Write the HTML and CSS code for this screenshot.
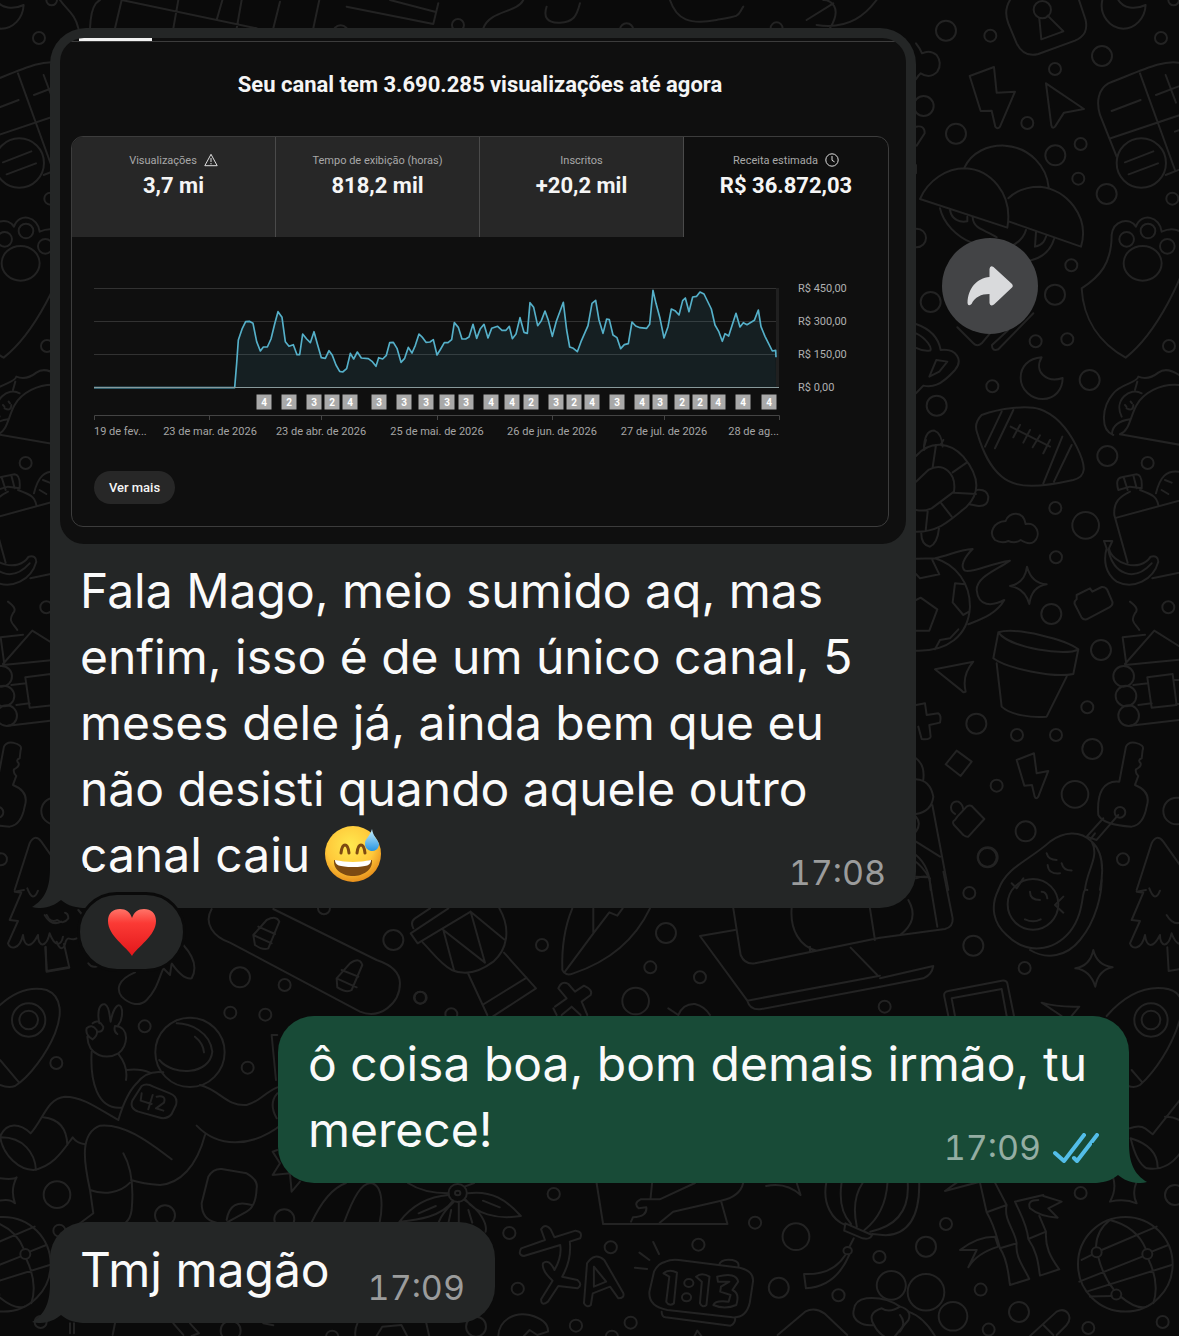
FILE: index.html
```
<!DOCTYPE html>
<html lang="pt-BR">
<head>
    <meta charset="UTF-8">
    <meta name="viewport" content="width=device-width, initial-scale=1.0">
    <title>Conversa</title>
    <link rel="stylesheet" href="styles.css">
</head>
<body>

    <!-- wallpaper: the doodles repeat every 1122px -->
    <svg class="wallpaper" aria-hidden="true">
        <defs>
            <clipPath id="left-edge"><path d="M0 0H80V982H0ZM0 1212H80V1336H0Z"/></clipPath>
        </defs>
        <g id="doodles">
            <!-- top strip -->
            <g transform="translate(50 0) scale(.3333)">
                <path d="M30 0C50 30 75 40 85 85M120 85L122 60C126 20 140 5 150 0M195 85L215 0M215 0L620 85M370 85L385 0M500 60L520 -10M560 85L575 0M670 85L690 5M790 85L808 0M890 20L1150 72L1165 10M1020 0L1155 35M1300 85C1320 30 1400 40 1420 0M1490 20C1480 50 1490 70 1530 68S1580 50 1590 10M1860 0C1880 60 1920 75 2000 60S2060 50 2080 20M2270 60L2350 10M2300 75C2400 90 2450 40 2480 0M2340 85C2380 20 2340 0 2320 0"/>
                <circle cx="872" cy="100" r="24"/><circle cx="1224" cy="75" r="18"/><circle cx="1730" cy="90" r="20"/><circle cx="2180" cy="85" r="18"/>
            </g>
            <!-- lock, bolt, mushrooms, keypad, guitar pick, moon, rugby ball -->
            <g transform="translate(900 0) scale(.3333)">
                <path d="M330 0C315 25 315 45 325 70L350 130C365 160 385 170 415 162L525 122C555 108 563 90 557 60L537 0M418 55L424 118L490 94L443 47"/>
                <circle cx="427" cy="29" r="26"/>
                <path d="M607 0C597 45 630 86 670 86C705 86 735 55 737 15C705 30 670 25 655 0"/>
                <path d="M209 228L282 201L290 278L345 275L300 380Q293 390 286 380L275 332L242 333ZM438 250L552 327L492 338L465 380Q457 388 454 376Z"/>
                <path d="M48 130Q60 145 66 160Q90 148 110 165Q128 190 112 215Q90 238 62 220Q55 225 48 238M48 380Q75 375 74 400L50 437M48 495v25"/>
                <path d="M192 505C215 455 265 435 315 437C390 442 440 500 446 562M60 597C85 540 140 505 195 505C270 508 340 580 322 683ZM325 595C350 570 380 560 420 560C500 568 570 650 543 740L328 665M120 625C130 670 170 710 215 728M150 630C155 660 180 668 202 664V650M218 652C220 690 260 690 290 712M378 690C370 720 345 735 320 745M408 697L405 740C430 735 435 720 440 705M463 715C450 760 420 775 390 782"/>
                <path d="M837 188C790 180 740 205 625 250C595 268 588 305 600 345L650 470M632 415L900 325M720 220L825 510M797 525L900 485M635 333L722 300M768 285L860 250M797 225L828 308M825 395L880 375M675 487L760 454M686 523L774 490"/>
                <circle cx="724" cy="489" r="74"/>
                <path d="M545 865C600 830 635 790 635 705C640 660 690 650 708 680C725 635 780 650 785 695C830 675 865 700 862 745C860 820 770 1000 677 1073C600 1030 550 960 545 865Z"/>
                <circle cx="680" cy="718" r="22"/><circle cx="744" cy="693" r="22"/><circle cx="802" cy="739" r="22"/><ellipse cx="728" cy="790" rx="57" ry="52"/>
                <path d="M172 982L220 1030Q232 1042 245 1030L270 1000M325 990L276 1035Q275 1055 295 1048L400 940M48 972C85 985 115 1010 122 1050C170 1045 190 1080 165 1110C120 1160 95 1162 70 1157L48 1180M48 1000C80 1015 98 1045 90 1052Q70 1055 48 1044M109 1080L142 1085L118 1115L88 1130Z"/>
                <path d="M425 1072C385 1075 362 1100 362 1133C362 1170 395 1197 428 1197C465 1197 488 1168 488 1134C440 1150 400 1115 425 1072Z"/>
                <path d="M232 1300Q220 1270 245 1245C300 1225 380 1215 420 1228C470 1245 505 1290 530 1340C560 1400 560 1430 520 1440C430 1460 350 1470 305 1430C270 1400 250 1360 232 1300ZM305 1235L255 1340M340 1230L285 1345M487 1310L430 1450M515 1335L462 1445M332 1280L450 1340M360 1275L340 1312M390 1290L370 1328M420 1306L398 1342M450 1320L430 1360"/>
                <path d="M837 1155C780 1150 730 1180 710 1215C690 1250 690 1290 660 1303L900 1345M640 1305C600 1290 605 1220 640 1180C665 1150 710 1150 715 1130C740 1140 760 1130 775 1118Q800 1100 837 1125M705 1170L712 1145M665 1250C640 1200 690 1160 725 1180M636 1300Q640 1265 690 1258M675 1215l4 5M692 1205l4 5M680 1225Q700 1235 700 1215"/>
                <path d="M72 1350C72 1310 85 1292 103 1292Q125 1300 128 1340"/>
                <circle cx="138" cy="92" r="30"/><circle cx="271" cy="107" r="18"/><circle cx="606" cy="168" r="30"/><circle cx="783" cy="114" r="18"/><circle cx="465" cy="207" r="18"/><circle cx="71" cy="318" r="30"/><circle cx="168" cy="401" r="30"/><circle cx="382" cy="369" r="18"/><circle cx="466" cy="466" r="30"/><circle cx="542" cy="432" r="18"/><circle cx="535" cy="536" r="18"/><circle cx="620" cy="582" r="30"/><circle cx="817" cy="596" r="18"/><circle cx="50" cy="714" r="28"/><circle cx="514" cy="796" r="18"/><circle cx="465" cy="884" r="30"/><circle cx="92" cy="906" r="30"/><circle cx="407" cy="1024" r="18"/><circle cx="502" cy="1018" r="18"/><circle cx="807" cy="1038" r="18"/><circle cx="569" cy="1140" r="30"/><circle cx="277" cy="1159" r="18"/><circle cx="110" cy="1217" r="30"/><circle cx="821" cy="0" r="16"/>
            </g>
            <!-- turtle, fireball, bottle, flower pot, cabin, key -->
            <g transform="translate(900 440) scale(.3333)">
                <path d="M48 48C90 0 150 5 190 50C240 110 240 160 200 200C150 240 120 275 48 275M48 125L85 90C130 65 170 100 162 155L95 205Q75 215 48 210M98 82L108 15M158 97L200 68M162 158L228 162M124 190L155 230M83 215L77 272M78 0L72 20M130 0L122 15M228 150Q260 145 265 170Q265 200 235 198L208 193M64 275Q62 315 90 320Q112 310 117 265"/>
                <path d="M285 300C265 280 280 245 317 243C325 215 370 210 377 252C410 245 425 285 402 305C390 315 375 308 362 300Q345 312 325 303Q305 312 285 300Z"/>
                <path d="M48 356L105 355C150 345 175 330 218 327C190 355 180 380 195 392C220 400 270 370 330 362C290 390 230 410 230 450C235 500 275 500 313 480C290 520 250 535 205 553M105 355C170 375 210 430 210 500C205 590 140 635 48 632M97 360L118 403L60 415L48 402M48 480L62 473L112 508L88 572H48M195 433L165 430L158 487L190 525L207 515M105 628L120 600L150 595L175 568"/>
                <path d="M381 380Q395 430 440 433Q395 440 388 492Q375 445 330 438Q375 430 381 380ZM530 465L570 445L577 455L605 441Q617 440 622 450L637 485Q640 495 628 502L560 538Q550 540 545 533L524 492Q522 484 530 478Z"/>
                <path d="M690 140L655 150Q645 115 665 112L710 103Q728 105 725 145ZM672 115L683 150M700 106L710 145M690 155C660 170 640 185 643 225L683 368M720 150C760 165 770 170 775 195M650 233L900 165M757 415L900 385M768 160C780 110 800 90 837 95M785 150l20 12M795 120l20 8M612 303h25l-10 22C635 370 720 400 752 350Q775 345 775 365C760 420 700 450 650 425C615 400 610 360 620 325ZM625 330C640 400 700 430 755 370"/>
                <path d="M690 485C710 500 715 510 705 520C690 545 705 550 718 570M668 592L735 584M668 592L678 665M675 672L763 572L880 645M675 675L880 655M700 735L745 730M715 795L755 790M690 857L880 835M742 712L818 702L830 795L755 803ZM823 720H870M828 792H880"/>
                <circle cx="671" cy="709" r="31"/><circle cx="678" cy="768" r="31"/><circle cx="686" cy="827" r="31"/>
                <path d="M295 577C350 560 500 600 535 628C500 650 330 625 295 577ZM295 577L280 655C320 685 460 715 520 702L535 628M290 670L305 800C330 825 400 835 440 830L500 710"/>
                <path d="M105 688L220 665Q185 705 197 755Q190 760 185 752ZM48 795L75 790L80 825L115 820Q125 825 120 848L88 855L92 890Q90 900 65 897L55 860M48 955Q75 975 70 1018M48 1018Q90 1020 100 1070Q95 1115 48 1122M48 1130Q65 1150 48 1175M97 1095L145 1350M48 1205L120 1250M48 1245Q90 1280 92 1350M48 1315Q75 1305 90 1315"/>
                <path d="M170 932L215 965L182 1008L137 973ZM350 960L402 940L410 1000L445 993L415 1070Q408 1080 404 1070L396 1035L373 1037ZM172 1130L200 1100Q208 1095 215 1098L253 1137L205 1190Q200 1192 190 1185L162 1155Q155 1145 165 1140ZM165 1122C145 1110 152 1080 175 1085Q188 1092 190 1108"/>
                <path d="M658 1025L678 920Q685 905 705 908Q735 915 728 930L725 955Q712 960 722 970Q725 980 708 988Q705 1000 715 1008L705 1035Q755 1055 740 1100Q730 1155 695 1160Q610 1155 595 1125C590 1060 610 1020 658 1025Z"/>
                <circle cx="660" cy="1117" r="16"/><path d="M655 1125L590 1200L560 1190L610 1135M585 1180l-15 20"/>
                <path d="M295 1350C320 1280 390 1260 450 1205C490 1175 540 1170 575 1205C600 1250 560 1290 555 1350M575 1205C615 1240 610 1300 600 1350M440 1240Q445 1260 470 1260M443 1275Q445 1303 480 1300M485 1270Q490 1292 515 1292M710 1350L755 1210Q770 1180 790 1205L850 1290"/>
                <circle cx="622" cy="48" r="30"/><circle cx="743" cy="69" r="18"/><circle cx="466" cy="204" r="18"/><circle cx="557" cy="256" r="40"/><circle cx="468" cy="352" r="18"/><circle cx="805" cy="502" r="18"/><circle cx="454" cy="522" r="30"/><circle cx="603" cy="630" r="30"/><circle cx="562" cy="802" r="18"/><circle cx="229" cy="851" r="30"/><circle cx="351" cy="885" r="18"/><circle cx="468" cy="885" r="18"/><circle cx="577" cy="927" r="30"/><circle cx="290" cy="1037" r="18"/><circle cx="525" cy="1063" r="40"/><circle cx="830" cy="1113" r="40"/><circle cx="377" cy="1174" r="30"/><circle cx="263" cy="1252" r="30"/><circle cx="669" cy="1258" r="18"/>
            </g>
            <!-- avocado, tree, tablet, map pin, bamboo, globe -->
            <g transform="translate(880 860) scale(.3333)">
                <path d="M218 175L190 35M148 55Q130 20 100 0M108 50L140 52M85 120Q120 180 60 225M172 200L148 55M0 233L195 207Q220 200 218 175M0 355L160 318Q155 345 130 355L0 380"/>
                <path d="M355 90C330 140 340 190 380 225C440 285 520 275 570 215C620 150 600 80 622 90M665 60C665 100 650 180 600 240C560 290 500 300 450 270M395 70L410 85L430 55M550 110L525 135L550 158M435 178Q460 190 482 178M450 95Q450 120 480 120M485 95Q500 95 502 115"/>
                <circle cx="459" cy="133" r="76"/>
                <path d="M798 90L770 95L790 98L755 180L780 183L750 250C755 270 785 270 795 225C800 265 820 265 840 225C840 262 865 265 875 220C890 260 910 260 915 230M808 85Q825 130 840 92M860 165Q880 200 910 185M862 262L866 333L930 322"/>
                <path d="M640 270Q650 315 698 322Q655 330 646 380Q630 330 586 325Q630 318 640 270ZM205 468L193 410Q190 395 205 393L365 362Q380 360 382 370L402 468M225 468L215 415L365 387L380 468M545 468L485 428Q530 442 598 440L575 468"/>
                <path d="M680 468C740 400 800 380 850 385C900 390 910 420 905 460C880 560 820 640 780 675Q765 685 745 678M755 630L785 665"/>
                <circle cx="813" cy="480" r="50"/><circle cx="813" cy="480" r="28"/>
                <path d="M195 993L230 968M195 993L320 960M300 968L320 1057L380 1035L345 968M320 1057C345 1100 350 1130 360 1165L410 1150C405 1110 370 1080 380 1035M360 1165C385 1200 385 1250 390 1275L448 1257C430 1220 405 1190 410 1150M240 1170Q290 1130 345 1130L355 1160Q290 1180 265 1222L290 1170ZM405 1025L490 1005M498 1115L445 1137C440 1090 420 1060 405 1025M445 1137C475 1180 475 1220 480 1247L538 1228C510 1190 495 1160 498 1115L478 1068M490 1008L545 1025L505 1045L533 1073Q480 1070 450 1045Q440 1020 475 1020"/>
                <circle cx="736" cy="1213" r="142"/><circle cx="650" cy="1177" r="15"/><circle cx="802" cy="1182" r="15"/><circle cx="709" cy="1304" r="15"/>
                <path d="M648 1160Q650 1110 690 1080Q770 1100 798 1168M605 1200L635 1185M665 1170L830 1100M598 1265L787 1190M815 1175L865 1155M805 1197Q840 1270 820 1330M655 1192Q670 1250 702 1290M620 1295L875 1215M630 1310L695 1308M722 1310Q770 1350 800 1340M700 955Q710 990 690 1025Q735 1015 770 1030Q755 1000 770 965M752 835Q770 910 800 925Q860 935 900 880M750 805C790 790 800 810 818 823L900 720M752 835Q835 860 833 925M855 770Q885 770 905 785M450 1428L530 1355C560 1340 580 1370 560 1395L530 1425M490 1395L520 1425"/>
                <path d="M85 1355Q130 1370 165 1428M60 1365Q80 1390 60 1415"/>
                <circle cx="268" cy="99" r="18"/><circle cx="280" cy="257" r="30"/><circle cx="434" cy="324" r="18"/><circle cx="14" cy="440" r="18"/><circle cx="322" cy="-8" r="28"/><circle cx="602" cy="999" r="18"/><circle cx="885" cy="1005" r="30"/><circle cx="198" cy="1092" r="18"/><circle cx="138" cy="1160" r="30"/><circle cx="138" cy="1297" r="55"/><circle cx="219" cy="1369" r="43"/><circle cx="302" cy="1289" r="18"/><circle cx="417" cy="1356" r="30"/><circle cx="326" cy="1409" r="18"/><circle cx="625" cy="1404" r="18"/><circle cx="848" cy="1386" r="18"/>
            </g>
            <!-- drum, leaf, cross, laptop -->
            <g transform="translate(400 880) scale(.3333)">
                <path d="M32 160L145 85M32 160L53 190L212 95M40 145Q30 125 45 115L90 85M68 187C100 220 120 250 155 270C200 290 240 275 280 245C320 210 335 150 298 85M212 95L312 178M212 95L255 248L130 150L162 270M205 282L262 405M312 218L408 325L270 415M380 293L252 372"/>
                <path d="M517 85C490 150 485 210 487 270Q495 290 520 280C610 250 700 190 750 85M580 85V158M495 275L580 160L628 97L652 107L668 85M465 380L500 355L475 325Q485 300 505 312L525 335L552 317Q580 330 572 345L545 365L562 405M460 385L470 405M485 405L515 380L542 405"/>
                <path d="M1000 85L1022 225Q1035 255 1065 250L1440 173M1005 150L900 168L1042 362L1440 287M1042 362Q1050 390 1080 388L1440 320M1175 85C1170 150 1200 200 1250 212M1410 85L1425 180M1352 203L1432 285M1230 212V200M805 385L835 405Q850 370 885 372Q915 380 930 405"/>
                <circle cx="-20" cy="180" r="30"/><circle cx="62" cy="353" r="18"/><circle cx="154" cy="403" r="18"/><circle cx="426" cy="195" r="18"/><circle cx="798" cy="159" r="30"/><circle cx="751" cy="262" r="18"/><circle cx="900" cy="292" r="18"/><circle cx="707" cy="363" r="40"/>
            </g>
            <!-- surfboard, rocket tail -->
            <g transform="translate(0 820) scale(.3333)">
                <path d="M635 267C610 310 640 350 690 368L1080 575C1140 600 1200 550 1200 490C1200 450 1160 430 1130 420L820 267M760 345L800 300Q830 285 838 305L805 385Q790 392 765 375ZM775 320L825 342M760 345L815 370M1010 475L1050 430Q1080 410 1087 435L1055 510Q1040 520 1012 502ZM1025 450L1075 470M1010 475L1070 502M235 270L245 282M170 365C178 390 192 392 197 365C205 345 212 365 230 355M137 380L140 455L208 443L192 372M140 285Q150 310 172 300Q190 315 205 295Q205 280 195 278M405 457C350 480 350 510 365 530C390 555 420 560 440 540C470 510 475 480 490 445L510 465L515 430Q550 480 575 475Q600 430 550 375M265 430Q275 445 292 438"/>
                <circle cx="720" cy="472" r="30"/><circle cx="854" cy="495" r="18"/><circle cx="691" cy="578" r="18"/><circle cx="796" cy="584" r="18"/><circle cx="972" cy="265" r="18"/><circle cx="1260" cy="533" r="18"/>
            </g>
            <!-- astronaut and map pin -->
            <g transform="translate(0 980) scale(.3333)">
                <path d="M0 75C50 30 100 20 140 30C190 50 185 110 165 160C140 220 90 290 45 318Q25 325 0 315M0 240L55 305"/>
                <circle cx="570" cy="217" r="104"/>
                <path d="M478 240C520 290 630 285 637 215C630 155 570 130 530 130M585 170Q610 190 612 217M275 215C270 300 290 390 365 383M355 222Q385 260 378 300M380 270Q420 265 450 278M355 420C370 370 390 330 410 310Q440 270 490 277M355 420C300 390 250 350 195 350C140 355 130 420 92 460C60 430 20 425 0 470C10 530 60 570 100 570C160 560 190 510 218 472Q230 490 255 493M130 412Q200 420 202 495M0 472C70 470 105 520 108 570M600 315C660 330 680 380 740 375C780 365 790 340 832 322M590 437C650 500 750 510 850 430M615 465C590 560 540 610 480 615Q430 612 393 600M370 520Q405 580 395 690Q392 715 378 727M515 538C440 480 370 430 300 437C240 460 250 540 270 630L280 700L240 730M270 630C310 645 360 640 390 608"/>
                <path d="M262 170C265 230 320 240 355 220C385 200 390 140 345 138Q340 155 352 162M298 130C290 90 300 70 315 73C330 80 328 110 332 125C340 80 360 60 366 90Q368 120 355 135M278 130Q295 115 310 140Q310 155 295 155M278 178Q255 165 260 145Q275 130 290 150Q295 165 278 178M425 318Q440 308 460 320L510 340Q535 350 528 375L515 402Q500 420 475 412L415 395Q388 385 397 362ZM425 340L422 362L455 372M458 345L445 388M470 350Q500 345 492 368L468 385L490 392"/>
                <path d="M625 590Q640 565 665 567L740 580Q775 600 770 625Q768 680 740 695L680 728M625 590L605 670Q605 720 650 728M680 720Q690 655 755 675M0 595Q40 600 50 592Q30 630 45 670Q30 655 0 662M832 165H815L828 300M832 340Q805 370 830 415M832 510L818 515L840 550L818 585L870 580L875 635L900 605M210 1030V1060M222 1030V1060M345 1030L338 1065M520 1030L550 1065M570 1030L597 1060L575 1068M790 1030L820 1036"/>
                <circle cx="86" cy="120" r="50"/><circle cx="86" cy="120" r="28"/><circle cx="169" cy="249" r="18"/><circle cx="434" cy="139" r="18"/><circle cx="743" cy="263" r="18"/><circle cx="171" cy="644" r="40"/><circle cx="495" cy="706" r="30"/><circle cx="853" cy="718" r="30"/><circle cx="178" cy="752" r="18"/><circle cx="692" cy="1052" r="30"/>
            </g>
            <!-- flower, letters, alarm clock, lantern -->
            <g transform="translate(300 1160) scale(.3827 .3333)">
                <path d="M30 188Q70 90 120 69M115 188C140 110 160 70 185 69C220 75 215 150 208 188M388 100C340 100 310 90 282 69M388 105C330 110 290 140 260 185C310 180 370 170 400 122M438 100C500 90 540 120 577 168C510 180 460 160 432 118M310 160L355 138M478 122L522 142M402 125Q370 160 362 188M415 125V188M388 188L395 150M430 120C470 150 490 190 485 215M440 150L450 188M430 80L455 69"/>
                <ellipse cx="412" cy="99" rx="24" ry="27"/><circle cx="412" cy="99" r="7"/>
                <path d="M775 69L792 192H1117L1100 122M920 69L916 115M1032 69L940 118L890 118Q870 130 885 145L905 142Q908 170 870 172L865 185M940 188L975 155L1100 122Q1150 110 1158 69M1218 78Q1270 65 1308 105L1298 69"/>
                <path d="M578 265L640 240L630 208Q640 188 655 208L665 232L720 212Q740 215 732 235L705 245Q710 300 685 350L725 360Q740 375 725 385L675 378L648 425Q630 440 630 418L660 362Q630 330 635 310Q650 295 665 330Q685 290 680 255L585 288Q568 285 578 265ZM742 430L750 310Q770 275 795 300L845 400Q848 415 832 415L810 380L765 400L760 435Q750 445 742 430ZM768 320V380L800 365Z"/>
                <path d="M955 305Q970 297 990 300L1140 322Q1190 330 1183 370L1175 430Q1165 475 1130 472L960 450Q910 440 913 395L925 335Q935 310 955 305ZM945 455Q945 470 955 472L1125 497Q1138 490 1137 475M1095 315Q1100 295 1130 300Q1150 305 1145 322M875 323L907 327M887 278L913 300M923 246L938 282"/>
                <path d="M950 340Q965 325 985 338L977 430Q965 440 957 425L965 350ZM1035 350Q1050 335 1070 350L1062 435Q1052 445 1045 430L1050 365ZM1090 350Q1140 335 1145 365L1130 390Q1150 400 1140 435Q1110 450 1080 435Q1085 420 1120 425L1125 405L1098 395L1100 380L1122 365L1092 365Z"/>
                <circle cx="1016" cy="369" r="12"/><circle cx="1010" cy="412" r="12"/>
                <path d="M1375 69C1365 130 1390 180 1425 195M1415 69Q1405 150 1440 192M1470 69Q1440 120 1455 200M1535 69Q1530 160 1475 210M1588 69Q1595 190 1490 215M1618 69Q1620 220 1530 226L1495 222M1425 190L1495 225Q1490 240 1470 235L1422 212ZM1447 235L1435 262M1425 285C1400 330 1360 345 1317 342L1322 385Q1400 380 1435 285"/>
                <circle cx="1431" cy="272" r="11"/><ellipse cx="663" cy="102" rx="16" ry="18"/><ellipse cx="547" cy="219" rx="16" ry="18"/><ellipse cx="812" cy="262" rx="16" ry="18"/><ellipse cx="569" cy="386" rx="16" ry="18"/><ellipse cx="1041" cy="254" rx="16" ry="18"/><ellipse cx="1189" cy="188" rx="16" ry="18"/><ellipse cx="1296" cy="230" rx="35" ry="40"/><ellipse cx="1251" cy="383" rx="26" ry="30"/><ellipse cx="1514" cy="291" rx="16" ry="18"/><ellipse cx="1407" cy="406" rx="16" ry="18"/><ellipse cx="721" cy="497" rx="16" ry="18"/><ellipse cx="864" cy="488" rx="16" ry="18"/><ellipse cx="815" cy="530" rx="16" ry="18"/><ellipse cx="1545" cy="376" rx="38" ry="43"/><ellipse cx="460" cy="500" rx="26" ry="30"/><ellipse cx="84" cy="530" rx="16" ry="18"/>
                <path d="M518 528C520 480 560 455 600 465Q650 480 648 515L620 525L600 510L585 528M1248 525L1320 455Q1345 440 1370 460L1430 525M1500 495C1470 500 1440 480 1447 450Q1450 420 1480 415Q1530 410 1568 440M1500 495Q1480 460 1520 445Q1540 460 1568 440Q1600 450 1590 480Q1575 500 1555 528M1500 495Q1510 520 1535 535M150 490Q142 510 145 530M330 490L338 530M200 528L215 500L265 495L280 528M1030 530L1038 512L1050 530"/>
            </g>
        </g>
        <g clip-path="url(#left-edge)">
            <use href="#doodles" x="-1122"/>
        </g>
    </svg>

    <main class="chat">
        <div class="row row-in">
            <article class="bubble bubble-in bubble-media">
                <section class="panel">
                    <div class="tab-line"><span class="tab-active"></span></div>
                    <h1 class="panel-title">Seu canal tem 3.690.285 visualizações até agora</h1>
                    <div class="card">
                        <ul class="metrics">
                            <li class="metric">
                                <span class="metric-label">Visualizações
                                    <svg class="metric-icon" viewBox="0 0 14 14" aria-hidden="true"><path d="M7 1.300L13.200 12.700H.8ZM7 5v4M7 10v1.300"/></svg>
                                </span>
                                <b class="metric-value">3,7 mi</b>
                            </li>
                            <li class="metric">
                                <span class="metric-label">Tempo de exibição (horas)</span>
                                <b class="metric-value">818,2 mil</b>
                            </li>
                            <li class="metric">
                                <span class="metric-label">Inscritos</span>
                                <b class="metric-value">+20,2 mil</b>
                            </li>
                            <li class="metric metric-on">
                                <span class="metric-label">Receita estimada
                                    <svg class="metric-icon" viewBox="0 0 14 14" aria-hidden="true"><circle cx="7" cy="7" r="6.200"/><path d="M7 3v4.300l2.600 1.600"/></svg>
                                </span>
                                <b class="metric-value">R$ 36.872,03</b>
                            </li>
                        </ul>

                        <svg class="chart" viewBox="72 237 816 216" role="img" aria-label="Receita estimada por dia">
                            <g class="grid-lines">
                                <path d="M94 288.500H779M94 321.500H779M94 354.500H779"/>
                                <path class="axis" d="M94.500 420V415.500H779.500V420M209.500 415.500V420M321.500 415.500V420M437.500 415.500V420M552.500 415.500V420M664.500 415.500V420"/>
                            </g>
                            <rect class="today" x="776" y="288" width="3" height="100"/>
                            <g transform="translate(80 270) scale(.33333)">
                                <path class="area" d="M464 353L470 280 475 210 487 175 497 155 508 154 519 160 530 215 541 243 550 231 562 231 573 207 584 162 594 125 606 142 616 215 627 229 640 224 651 254 659 254 668 192 680 207 691 218 702 185 713 225 724 263 736 265 747 242 757 256 768 285 779 304 788 306 800 296 811 250 821 267 832 246 844 264 865 266 876 274 888 289 896 263 908 267 919 256 929 218 940 217 951 235 963 277 974 265 985 232 996 249 1006 226 1017 192 1028 203 1038 217 1050 216 1060 209 1071 255 1082 237 1093 218 1104 218 1115 209 1123 158 1135 172 1146 207 1157 207 1167 201 1179 163 1190 205 1201 176 1212 163 1224 204 1235 175 1253 169 1266 181 1278 181 1288 169 1297 206 1308 192 1320 143 1332 187 1342 190 1350 98 1361 112 1373 167 1384 152 1395 123 1405 151 1417 199 1429 154 1450 97 1460 180 1469 231 1480 235 1492 245 1503 215 1524 167 1536 100 1547 91 1557 150 1569 190 1580 147 1588 149 1599 195 1611 203 1622 236 1633 224 1645 221 1656 156 1667 168 1680 173 1700 175 1709 163 1719 61 1728 100 1740 145 1752 204 1764 170 1774 117 1785 122 1797 135 1808 92 1816 84 1827 125 1838 81 1850 79 1860 66 1872 72 1894 117 1905 165 1916 184 1927 214 1935 191 1946 198 1968 130 1980 171 1990 158 2001 164 2023 151 2035 120 2043 170 2055 199 2077 243 2087 241 2088 353Z"/>
                                <path class="line" d="M42 353H464L470 280 475 210 487 175 497 155 508 154 519 160 530 215 541 243 550 231 562 231 573 207 584 162 594 125 606 142 616 215 627 229 640 224 651 254 659 254 668 192 680 207 691 218 702 185 713 225 724 263 736 265 747 242 757 256 768 285 779 304 788 306 800 296 811 250 821 267 832 246 844 264 865 266 876 274 888 289 896 263 908 267 919 256 929 218 940 217 951 235 963 277 974 265 985 232 996 249 1006 226 1017 192 1028 203 1038 217 1050 216 1060 209 1071 255 1082 237 1093 218 1104 218 1115 209 1123 158 1135 172 1146 207 1157 207 1167 201 1179 163 1190 205 1201 176 1212 163 1224 204 1235 175 1253 169 1266 181 1278 181 1288 169 1297 206 1308 192 1320 143 1332 187 1342 190 1350 98 1361 112 1373 167 1384 152 1395 123 1405 151 1417 199 1429 154 1450 97 1460 180 1469 231 1480 235 1492 245 1503 215 1524 167 1536 100 1547 91 1557 150 1569 190 1580 147 1588 149 1599 195 1611 203 1622 236 1633 224 1645 221 1656 156 1667 168 1680 173 1700 175 1709 163 1719 61 1728 100 1740 145 1752 204 1764 170 1774 117 1785 122 1797 135 1808 92 1816 84 1827 125 1838 81 1850 79 1860 66 1872 72 1894 117 1905 165 1916 184 1927 214 1935 191 1946 198 1968 130 1980 171 1990 158 2001 164 2023 151 2035 120 2043 170 2055 199 2077 243 2087 241 2088 262"/>
                            </g>
                            <path class="zero" d="M94 387.500H779"/>

                            <!-- number of videos published -->
                            <path class="badges" d="M264 402h0M289 402h0M314 402h0M332 402h0M350 402h0M379 402h0M404 402h0M426 402h0M447 402h0M466 402h0M491 402h0M512 402h0M531 402h0M556 402h0M574 402h0M592 402h0M617 402h0M642 402h0M660 402h0M682 402h0M700 402h0M718 402h0M743 402h0M769 402h0"/>
                            <g class="badge-text">
                                <text x="264" y="406">4</text><text x="289" y="406">2</text><text x="314" y="406">3</text><text x="332" y="406">2</text><text x="350" y="406">4</text><text x="379" y="406">3</text><text x="404" y="406">3</text><text x="426" y="406">3</text><text x="447" y="406">3</text><text x="466" y="406">3</text><text x="491" y="406">4</text><text x="512" y="406">4</text><text x="531" y="406">2</text><text x="556" y="406">3</text><text x="574" y="406">2</text><text x="592" y="406">4</text><text x="617" y="406">3</text><text x="642" y="406">4</text><text x="660" y="406">3</text><text x="682" y="406">2</text><text x="700" y="406">2</text><text x="718" y="406">4</text><text x="743" y="406">4</text><text x="769" y="406">4</text>
                            </g>
                            <g class="value-text">
                                <text x="798" y="292">R$ 450,00</text>
                                <text x="798" y="325">R$ 300,00</text>
                                <text x="798" y="358">R$ 150,00</text>
                                <text x="798" y="391">R$ 0,00</text>
                            </g>
                            <g class="date-text">
                                <text class="date-first" x="94" y="435">19 de fev...</text>
                                <text x="210" y="435">23 de mar. de 2026</text>
                                <text x="321" y="435">23 de abr. de 2026</text>
                                <text x="437" y="435">25 de mai. de 2026</text>
                                <text x="552" y="435">26 de jun. de 2026</text>
                                <text x="664" y="435">27 de jul. de 2026</text>
                                <text class="date-last" x="779" y="435">28 de ag...</text>
                            </g>
                        </svg>
                        <button type="button" class="more">Ver mais</button>
                    </div>
                </section>
                <div class="message">Fala Mago, meio sumido aq, mas enfim, isso é de um único canal, 5 meses dele já, ainda bem que eu não desisti quando aquele outro canal caiu
                    <svg class="emoji" viewBox="0 0 58 58" role="img" aria-label="sorriso com gota de suor">
                        <defs>
                            <radialGradient id="face" cx=".45" cy=".35" r=".65"><stop offset="0" stop-color="#ffe94f"/><stop offset=".65" stop-color="#ffc83a"/><stop offset="1" stop-color="#e8901c"/></radialGradient>
                            <linearGradient id="drop" x2="0" y2="1"><stop offset="0" stop-color="#c8f0ff"/><stop offset="1" stop-color="#2795e0"/></linearGradient>
                        </defs>
                        <circle cx="29" cy="29" r="28" fill="url(#face)"/>
                        <path d="M10 35Q29 40 48 35C49 45 39 51 29 51S9 45 10 35Z" fill="#7d4a12"/>
                        <path d="M11 35Q29 39 47 35C47 40 43 42 29 42S11 40 11 35Z" fill="#fff"/>
                        <path d="M17 28Q18 20 21 20T25 28M33 28Q34 20 37 20T41 28" fill="none" stroke="#7d4a12" stroke-width="3" stroke-linecap="round"/>
                        <path d="M48 4C49 12 55 15 55 20A7 7 0 0 1 41 18C41 14 46 11 48 4Z" fill="url(#drop)"/>
                    </svg>
                    <time class="time">17:08</time>
                </div>
                <svg class="tail tail-in" viewBox="0 0 55 40" aria-hidden="true"><path d="M18 0C18 20 13 31 0 39C11 42 22 38 29 32C36 38 44 40 55 40V0Z"/></svg>
                <button type="button" class="reaction" aria-label="Reação: coração">
                    <svg class="heart" viewBox="0 0 50 48" aria-hidden="true">
                        <defs>
                            <linearGradient id="red" x2="0" y2="1"><stop offset="0" stop-color="#ff7468"/><stop offset=".3" stop-color="#fb3a35"/><stop offset="1" stop-color="#e3171b"/></linearGradient>
                        </defs>
                        <path d="M25 48C20 39 1 28 1 13C1 5 6 1 13 1C19 1 23 4 25 10C27 4 31 1 37 1C44 1 49 5 49 13C49 28 30 39 25 48Z" fill="url(#red)"/>
                    </svg>
                </button>
            </article>
            <button type="button" class="forward" aria-label="Encaminhar">
                <svg class="forward-icon" viewBox="0 0 46 40" aria-hidden="true"><path d="M.5 37C1 22 10 12 22.500 11V3Q23 -1 26.500 1L45 18Q46.500 20 45 21.500L27 38.500Q23 41 22.500 37V28C14 28 8 31 4.500 38Q1 41 .5 37Z"/></svg>
            </button>
        </div>

        <div class="row row-out">
            <article class="bubble bubble-out">
                <div class="message">ô coisa boa, bom demais irmão, tu merece!
                    <time class="time">17:09
                        <svg class="ticks" viewBox="0 0 46 30" role="img" aria-label="Lida"><path d="M2 20L11 28L31 2M21 25L24 28L44 2"/></svg>
                    </time>
                </div>
                <svg class="tail tail-out" viewBox="0 0 55 40" aria-hidden="true"><path d="M18 0C18 20 13 31 0 39C11 42 22 38 29 32C36 38 44 40 55 40V0Z"/></svg>
            </article>
        </div>

        <div class="row row-in">
            <article class="bubble bubble-in">
                <div class="message">Tmj magão
                    <time class="time">17:09</time>
                </div>
                <svg class="tail tail-in" viewBox="0 0 55 40" aria-hidden="true"><path d="M18 0C18 20 13 31 0 39C11 42 22 38 29 32C36 38 44 40 55 40V0Z"/></svg>
            </article>
        </div>
    </main>

</body>
</html>
```
FILE: styles.css
```
* {
    box-sizing: border-box;
}
body {
    margin: 0;
    background-color: #0a0a0a;
    color: #fafafa;
    font-family: Inter, "Liberation Sans", sans-serif;
    position: relative;
    overflow-x: hidden;
}
button {
    border: 0;
    padding: 0;
    cursor: pointer;
}

/* wallpaper */
.wallpaper {
    position: absolute;
    inset: 0;
    width: 100%;
    height: 100%;
    z-index: -1;
    fill: none;
    stroke: #232323;
    stroke-width: 2px;
    stroke-linecap: round;
    stroke-linejoin: round;
}
.wallpaper path,
.wallpaper circle,
.wallpaper ellipse {
    vector-effect: non-scaling-stroke;
}

/* chat rows */
.chat {
    padding: 28px 50px 13px;
}
.row {
    display: flex;
    align-items: flex-start;
}
.row-in {
    gap: 26px;
}
.row-out {
    justify-content: flex-end;
    margin-top: 108px;
    margin-bottom: 39px;
}
.bubble {
    position: relative;
    max-width: 866px;
    padding: 15px 30px 20px;
    border-radius: 36px;
}
.bubble-in {
    background-color: #242626;
    fill: #242626;
}
.bubble-out {
    background-color: #184b37;
    fill: #184b37;
    max-width: 851px;
}
.bubble-media {
    padding: 10px 10px 20px;
}
.bubble-media .message {
    padding: 14px 20px 0;
}
.message {
    font-size: 48px;
    line-height: 66px;
}
.time {
    float: right;
    display: flex;
    align-items: center;
    gap: 12px;
    margin-top: 27px;
    margin-bottom: -9px;
    margin-left: 38px;
    font-size: 34px;
    line-height: 48px;
    font-variant-numeric: tabular-nums;
    color: #9b9c9c;
}
.bubble-out .time {
    color: #94aea3;
}
.ticks {
    width: 46px;
    height: 30px;
    fill: none;
    stroke: #53bde8;
    stroke-width: 4px;
    stroke-linecap: round;
    stroke-linejoin: round;
}
.emoji {
    width: 58px;
    height: 58px;
    vertical-align: -11px;
}
.tail {
    position: absolute;
    bottom: 0;
    width: 55px;
    height: 40px;
}
.tail-in {
    left: -18px;
}
.tail-out {
    right: -18px;
    transform: scaleX(-1);
}
.reaction {
    position: absolute;
    left: 27px;
    bottom: -64px;
    width: 109px;
    height: 80px;
    border: 3px solid #0a0a0a;
    border-radius: 40px;
    background-color: #242626;
}
.heart {
    width: 50px;
    height: 48px;
    vertical-align: middle;
}
.forward {
    flex: none;
    width: 96px;
    height: 96px;
    margin-top: 210px;
    border-radius: 50%;
    background-color: #434446;
}
.forward-icon {
    width: 46px;
    height: 40px;
    vertical-align: middle;
    fill: #d9dadc;
}

/* analytics panel */
.panel {
    padding: 0 17px 17px 11px;
    border-radius: 24px;
    overflow: hidden;
    background-color: #0f0f0f;
    font-family: Roboto, "Liberation Sans", sans-serif;
}
.tab-line {
    height: 4px;
    margin: 0 -17px 0 -11px;
    padding-left: 19px;
    border-bottom: 1px solid #3c3c3c;
}
.tab-active {
    display: block;
    width: 73px;
    height: 3px;
    background-color: #f1f1f1;
}
.panel-title {
    margin: 0;
    padding: 29px 0 37px;
    font-size: 22px;
    line-height: 28px;
    font-weight: 700;
    text-align: center;
    color: #f5f5f5;
}
.card {
    border: 1px solid #3c3c3c;
    border-radius: 12px;
    overflow: hidden;
}
.metrics {
    display: grid;
    grid-template-columns: repeat(4, 1fr);
    margin: 0;
    padding: 0;
    list-style: none;
}
.metric {
    height: 100px;
    padding-top: 14px;
    border-right: 1px solid #4a4a4a;
    background-color: #272727;
    text-align: center;
}
.metric-on {
    border-right: 0;
    background-color: transparent;
}
.metric-label {
    display: flex;
    justify-content: center;
    align-items: center;
    gap: 7px;
    height: 18px;
    font-size: 11px;
    color: #a8a8a8;
}
.metric-icon {
    width: 14px;
    height: 14px;
    fill: none;
    stroke: #dedede;
    stroke-width: 1px;
}
.metric-value {
    font-size: 22px;
    line-height: 34px;
    color: #f5f5f5;
}
.chart {
    display: block;
    width: 100%;
}
.grid-lines {
    fill: none;
    stroke: #323232;
    stroke-width: 1px;
}
.axis {
    stroke: #444;
}
.today {
    fill: #202020;
}
.area {
    fill: #4fb3d0;
    fill-opacity: .1;
}
.line {
    fill: none;
    stroke: #55b0c9;
    stroke-width: 5px;
    stroke-linejoin: round;
}
.zero {
    stroke: #87999b;
}
.badges {
    stroke: #a9a9a9;
    stroke-width: 15px;
    stroke-linecap: square;
}
.badge-text {
    fill: #fff;
    font-size: 10px;
    font-weight: 700;
    text-anchor: middle;
}
.value-text {
    fill: #b0b0b0;
    font-size: 11px;
}
.date-text {
    fill: #a5a5a5;
    font-size: 11px;
    text-anchor: middle;
}
.date-first {
    text-anchor: start;
}
.date-last {
    text-anchor: end;
}
.more {
    display: block;
    width: 81px;
    height: 33px;
    margin: 18px 22px 22px;
    border-radius: 17px;
    background-color: #272727;
    color: #f5f5f5;
    font-family: inherit;
    font-size: 13px;
    font-weight: 500;
}
```
